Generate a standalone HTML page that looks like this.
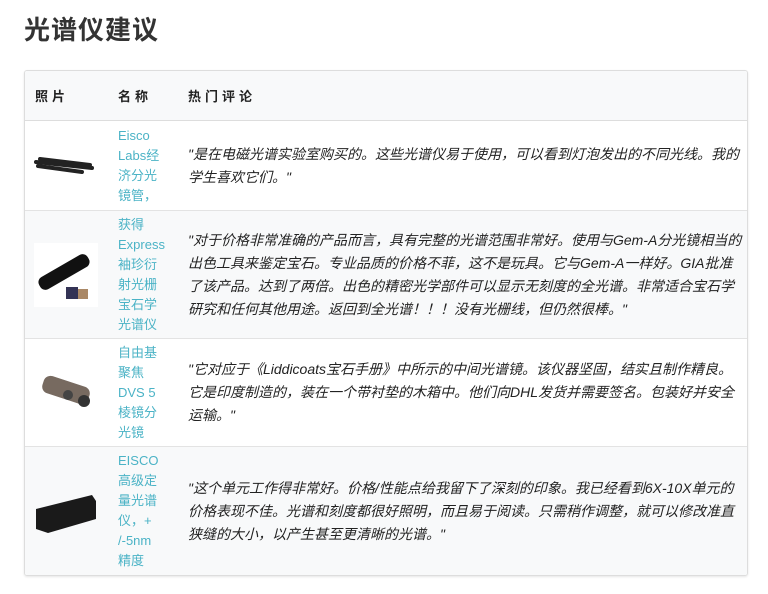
<!DOCTYPE html>
<html><head><meta charset="utf-8"><style>
body{margin:0;background:#fff;font-family:"Liberation Sans","Noto Sans CJK SC",sans-serif;color:#333;width:768px;height:594px;overflow:hidden}
h1{position:absolute;left:24px;top:10px;margin:0;font-size:26px;font-weight:bold;color:#333;letter-spacing:1px;font-family:"Noto Sans CJK SC",sans-serif}
.box{position:absolute;left:24px;top:70px;width:722px;height:504px;border:1px solid #ddd;border-radius:3px;box-shadow:0 1px 2px rgba(0,0,0,.1);overflow:hidden}
table{border-collapse:collapse;width:722px;table-layout:fixed;font-size:13px}
th{text-align:left;font-weight:bold;letter-spacing:4px;height:49px;background:#f8f9fa;border-bottom:1px solid #ddd;padding:0;color:#222;font-size:13px}
td{border-top:1px solid #e3e3e3;padding:0;vertical-align:middle;line-height:23px}
td.n{color:#4bb3c6;font-size:13px;white-space:nowrap;line-height:20px}
td.c{font-style:italic;color:#222;padding-right:3px;font-size:14px}
tr.g td{background:#f8f9fa}
.img{margin-left:9px;width:64px;height:40px;display:block}
</style></head><body>
<h1>光谱仪建议</h1>
<div class="box"><table>
<colgroup><col style="width:93px"><col style="width:70px"><col></colgroup>
<tr><th style="padding-left:10px">照片</th><th>名称</th><th>热门评论</th></tr>
<tr style="height:90px"><td><svg class="img" viewBox="0 0 64 40"><g stroke="#222" stroke-width="4" stroke-linecap="round"><line x1="2" y1="16" x2="58" y2="22"/><line x1="6" y1="13" x2="56" y2="19"/><line x1="4" y1="20" x2="48" y2="26"/></g></svg></td><td class="n">Eisco<br>Labs经<br>济分光<br>镜管，</td><td class="c">"是在电磁光谱实验室购买的。这些光谱仪易于使用，可以看到灯泡发出的不同光线。我的学生喜欢它们。"</td></tr>
<tr class="g" style="height:128px"><td><svg class="img" viewBox="0 0 64 64" style="height:64px"><rect width="64" height="64" fill="#fff"/><rect x="2" y="22" width="56" height="14" rx="6" fill="#111" transform="rotate(-30 30 29)"/><rect x="32" y="44" width="12" height="12" fill="#335"/><rect x="44" y="46" width="10" height="10" fill="#a86"/></svg></td><td class="n">获得<br>Express<br>袖珍衍<br>射光栅<br>宝石学<br>光谱仪</td><td class="c">"对于价格非常准确的产品而言，具有完整的光谱范围非常好。使用与Gem-A分光镜相当的出色工具来鉴定宝石。专业品质的价格不菲，这不是玩具。它与Gem-A一样好。GIA批准了该产品。达到了两倍。出色的精密光学部件可以显示无刻度的全光谱。非常适合宝石学研究和任何其他用途。返回到全光谱！！！没有光栅线，但仍然很棒。"</td></tr>
<tr style="height:108px"><td><svg class="img" viewBox="0 0 64 40"><rect x="8" y="8" width="48" height="18" rx="7" fill="#776a60" transform="rotate(18 32 17)"/><circle cx="50" cy="28" r="6" fill="#333"/><circle cx="34" cy="22" r="5" fill="#444"/></svg></td><td class="n">自由基<br>聚焦<br>DVS 5<br>棱镜分<br>光镜</td><td class="c">"它对应于《Liddicoats宝石手册》中所示的中间光谱镜。该仪器坚固，结实且制作精良。它是印度制造的，装在一个带衬垫的木箱中。他们向DHL发货并需要签名。包装好并安全运输。"</td></tr>
<tr class="g" style="height:129px"><td><svg class="img" viewBox="0 0 64 44" style="height:44px"><polygon points="2,20 58,6 62,12 62,30 14,44 2,40" fill="#1a1a1a"/></svg></td><td class="n">EISCO<br>高级定<br>量光谱<br>仪，+<br>/-5nm<br>精度</td><td class="c">"这个单元工作得非常好。价格/性能点给我留下了深刻的印象。我已经看到6X-10X单元的价格表现不佳。光谱和刻度都很好照明，而且易于阅读。只需稍作调整，就可以修改准直狭缝的大小，以产生甚至更清晰的光谱。"</td></tr>
</table></div>
</body></html>
